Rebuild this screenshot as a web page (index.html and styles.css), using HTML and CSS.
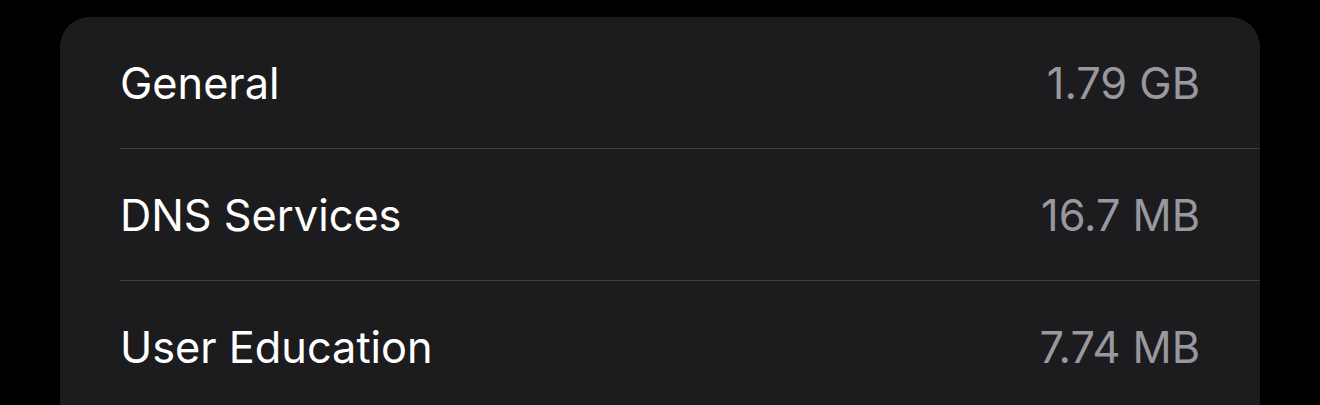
FILE: index.html
```html
<!DOCTYPE html>
<html>
<head>
<meta charset="utf-8">
<link rel="stylesheet" href="styles.css">
</head>
<body>
<div class="card">
  <div class="row"><div class="row-inner"><span class="label">General</span><span class="value">1.79 GB</span></div></div>
  <div class="row"><div class="row-inner"><span class="label">DNS Services</span><span class="value">16.7 MB</span></div></div>
  <div class="row"><div class="row-inner"><span class="label">User Education</span><span class="value">7.74 MB</span></div></div>
</div>
</body>
</html>
```
FILE: styles.css
```css
html, body {
  margin: 0;
  padding: 0;
  background: #000;
}
body {
  font-family: Inter, "Noto Sans", sans-serif;
  height: 405px;
  overflow: hidden;
}
.card {
  margin: 17px 0 0 60px;
  width: 1200px;
  height: 388px;
  overflow: hidden;
  background: #1c1c1e;
  border-radius: 30px 30px 0 0;
}
.row {
  padding-left: 60px;
}
.row-inner {
  height: 131px;
  border-bottom: 1px solid #3d3d41;
  display: flex;
  align-items: center;
  justify-content: space-between;
  padding-right: 60px;
  font-size: 43.3px;
}
.label {
  color: #fff;
}
.value {
  color: #98989f;
}
```
